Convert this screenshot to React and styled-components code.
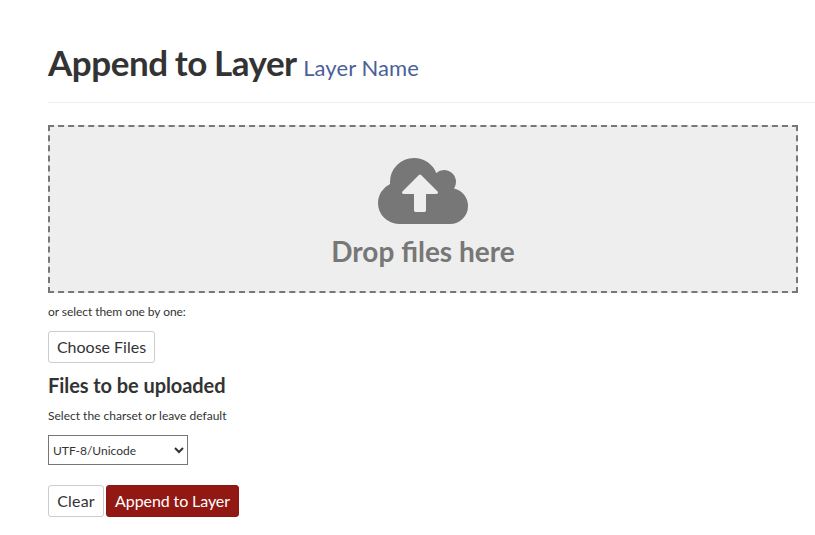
import React from 'react';
import styled, { createGlobalStyle } from 'styled-components';

const GlobalStyle = createGlobalStyle`
  * { box-sizing: border-box; }
  html, body { margin: 0; background: #fff; overflow: hidden; }
  body { font-family: Lato, sans-serif; font-size: 12px; line-height: 20px; color: #333; }
`;
const Page = styled.main`
  padding: 42px 0 0 48px;
`;
const Header = styled.header`
  height: 61px;
  border-bottom: 1px solid #eee;
`;
const Title = styled.h2`
  margin: 0;
  font-size: 35px;
  font-weight: 700;
  line-height: 41px;
  letter-spacing: -0.46px;
  word-spacing: -0.9px;
`;
const LayerLink = styled.a`
  font-size: 22px;
  font-weight: 400;
  letter-spacing: 0.1px;
  word-spacing: 0;
  color: #4b5f9a;
`;
const DropZone = styled.section`
  width: 750px;
  height: 168px;
  margin-top: 22px;
  border: 2px dashed #777;
  background: #eee;
  color: #777;
  display: flex;
  flex-direction: column;
  align-items: center;
  padding-top: 31px;
`;
const CloudIcon = styled.svg`
  width: 90px;
  height: 66px;
  display: block;
  fill: currentColor;
`;
const DropText = styled.h3`
  margin: 10px 0 0;
  font-size: 28px;
  font-weight: 700;
  line-height: 34px;
`;
const Hint = styled.p`
  margin: 9px 0 0;
  letter-spacing: ${p => p.$tracking || 0}px;
`;
const Button = styled.button`
  height: 32px;
  width: ${p => p.$width}px;
  margin: 0;
  padding: 0;
  border: 1px solid ${p => (p.$primary ? '#8a1812' : '#ccc')};
  border-radius: 3px;
  background: ${p => (p.$primary ? '#921813' : '#fff')};
  color: ${p => (p.$primary ? '#fff' : '#333')};
  font: 400 16px/20px Lato, sans-serif;
  letter-spacing: ${p => p.$tracking || 0}px;
`;
const ChooseRow = styled.div`
  display: flex;
  margin-top: 9px;
`;
const SubTitle = styled.h4`
  margin: 10px 0 0;
  font-size: 20px;
  font-weight: 700;
  line-height: 24px;
  letter-spacing: -0.07px;
`;
const Select = styled.select`
  display: block;
  width: 140px;
  height: 30px;
  margin-top: 9px;
  padding: 0;
  border: 1px solid #767676;
  border-radius: 0;
  background: #fff;
  color: #333;
  font: 400 12px Lato, sans-serif;
`;
const Actions = styled.div`
  display: flex;
  gap: 2px;
  margin-top: 20px;
`;

export default function App() {
  return (
    <Page>
      <GlobalStyle />
      <Header>
        <Title>Append to Layer <LayerLink>Layer Name</LayerLink></Title>
      </Header>
      <DropZone>
        <CloudIcon viewBox="0 128 1920 1408" preserveAspectRatio="none">
          <path d="M1280 864q0-14-9-23L919 489q-9-9-23-9t-23 9L522 840q-10 12-10 24 0 14 9 23t23 9h224v352q0 13 9.500 22.500t22.500 9.500h192q13 0 22.500-9.500t9.500-22.500V896h224q13 0 22.500-9.500t9.500-22.500zm640 288q0 159-112.500 271.500T1536 1536H448q-185 0-316.500-131.500T0 1088q0-130 70-240t188-165q-2-30-2-43 0-212 150-362t362-150q156 0 285.500 87T1242 446q71-62 166-62 106 0 181 75t75 181q0 76-41 138 130 31 213.500 135.500T1920 1152z" />
        </CloudIcon>
        <DropText>Drop files here</DropText>
      </DropZone>
      <Hint $tracking={-0.06}>or select them one by one:</Hint>
      <ChooseRow><Button $width={107}>Choose Files</Button></ChooseRow>
      <SubTitle>Files to be uploaded</SubTitle>
      <Hint>Select the charset or leave default</Hint>
      <Select defaultValue="utf8" aria-label="Charset">
        <option value="utf8">UTF-8/Unicode</option>
      </Select>
      <Actions>
        <Button $width={56} $tracking={0.2}>Clear</Button>
        <Button $width={133} $tracking={-0.1} $primary>Append to Layer</Button>
      </Actions>
    </Page>
  );
}
